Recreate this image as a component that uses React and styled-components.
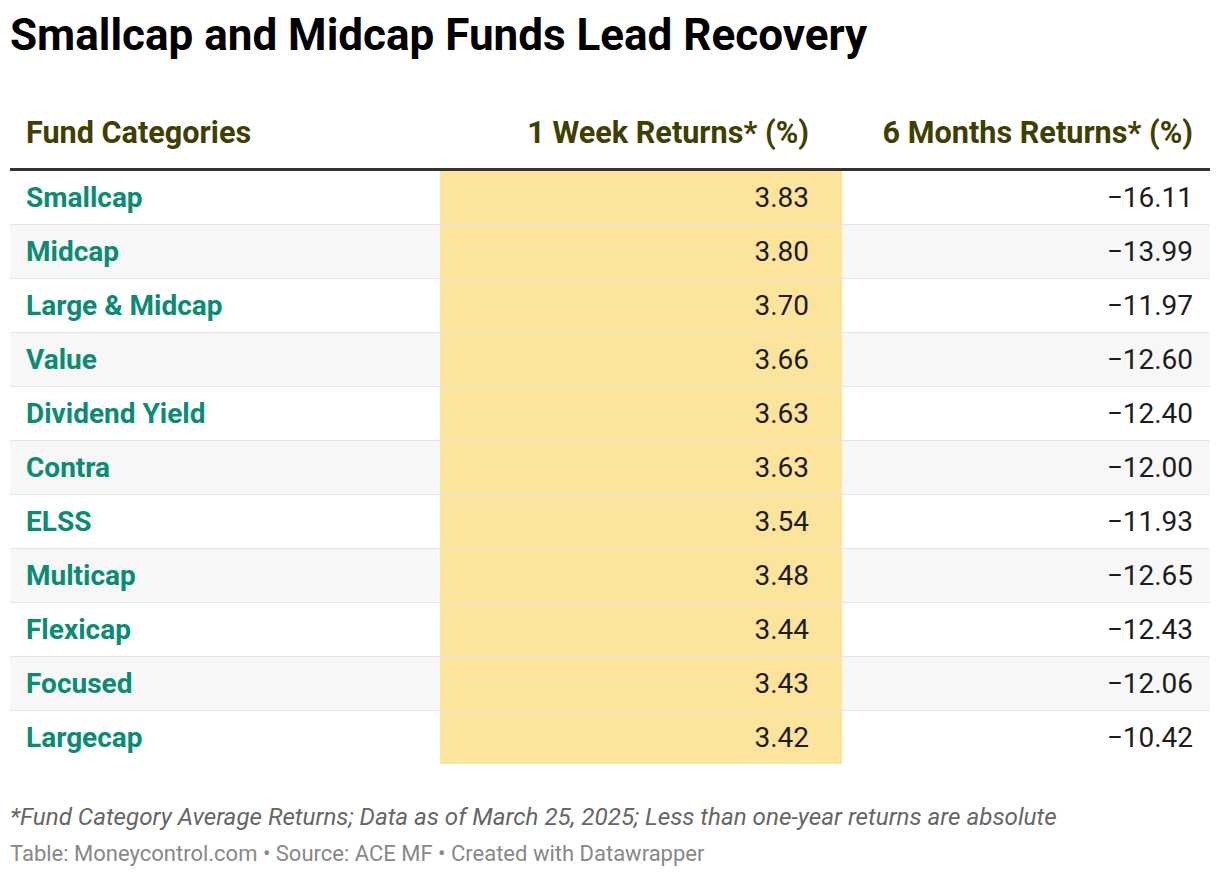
import React from "react";
import styled, { createGlobalStyle } from "styled-components";

const GlobalStyle = createGlobalStyle`
  body {
    margin: 0;
    background: #ffffff;
    font-family: Roboto, "Liberation Sans", sans-serif;
  }
`;

const Page = styled.div`
  padding: 9px 10px 0 10px;
  width: 1200px;
`;

const Title = styled.h1`
  margin: 0;
  font-size: 44px;
  font-weight: 700;
  color: #000000;
  line-height: 52px;
`;

const Table = styled.table`
  margin-top: 54px;
  width: 100%;
  border-collapse: collapse;
  table-layout: fixed;
`;

const HeadCell = styled.th`
  font-size: 30.6px;
  font-weight: 700;
  color: #3f3f00;
  text-align: ${(p) => (p.$right ? "right" : "left")};
  padding: 0 ${(p) => p.$pr || 17}px 17px 16px;
  border-bottom: 3px solid #333333;
  line-height: 36px;
  vertical-align: bottom;
`;

const Row = styled.tr`
  background: ${(p) => (p.$odd ? "#f7f7f7" : "#ffffff")};
  border-bottom: ${(p) => (p.$last ? "none" : "1px solid #e5e5e5")};
`;

const NameCell = styled.td`
  font-size: 28px;
  font-weight: 700;
  color: #0a8c73;
  padding: 0 16px;
  height: 53px;
  line-height: 53px;
`;

const NumCell = styled.td`
  font-size: 28px;
  font-weight: 400;
  color: #1d1d1d;
  text-align: right;
  padding: 0 ${(p) => p.$pr || 17}px 0 17px;
  height: 53px;
  line-height: 53px;
  background: ${(p) => (p.$highlight ? "#fde49c" : "transparent")};
`;

const Notes = styled.p`
  margin: 38px 0 0 0;
  font-size: 24.2px;
  font-style: italic;
  color: #666666;
  line-height: 30px;
`;

const Source = styled.p`
  margin: 8px 0 0 0;
  font-size: 22px;
  color: #888888;
  line-height: 28px;
`;

const rows = [
  ["Smallcap", "3.83", "\u221216.11"],
  ["Midcap", "3.80", "\u221213.99"],
  ["Large & Midcap", "3.70", "\u221211.97"],
  ["Value", "3.66", "\u221212.60"],
  ["Dividend Yield", "3.63", "\u221212.40"],
  ["Contra", "3.63", "\u221212.00"],
  ["ELSS", "3.54", "\u221211.93"],
  ["Multicap", "3.48", "\u221212.65"],
  ["Flexicap", "3.44", "\u221212.43"],
  ["Focused", "3.43", "\u221212.06"],
  ["Largecap", "3.42", "\u221210.42"],
];

const App = () => {
  return (
    <Page>
      <GlobalStyle />
      <Title>Smallcap and Midcap Funds Lead Recovery</Title>
      <Table>
        <colgroup>
          <col style={{ width: "430px" }} />
          <col style={{ width: "402px" }} />
          <col style={{ width: "368px" }} />
        </colgroup>
        <thead>
          <tr>
            <HeadCell>Fund Categories</HeadCell>
            <HeadCell $right $pr={33}>
              1 Week Returns* (%)
            </HeadCell>
            <HeadCell $right>6 Months Returns* (%)</HeadCell>
          </tr>
        </thead>
        <tbody>
          {rows.map((row, i) => (
            <Row key={row[0]} $odd={i % 2 === 1} $last={i === rows.length - 1}>
              <NameCell>{row[0]}</NameCell>
              <NumCell $highlight $pr={33}>
                {row[1]}
              </NumCell>
              <NumCell>{row[2]}</NumCell>
            </Row>
          ))}
        </tbody>
      </Table>
      <Notes>
        *Fund Category Average Returns; Data as of March 25, 2025; Less than
        one-year returns are absolute
      </Notes>
      <Source>
        Table: Moneycontrol.com • Source: ACE MF • Created with Datawrapper
      </Source>
    </Page>
  );
};

export default App;
